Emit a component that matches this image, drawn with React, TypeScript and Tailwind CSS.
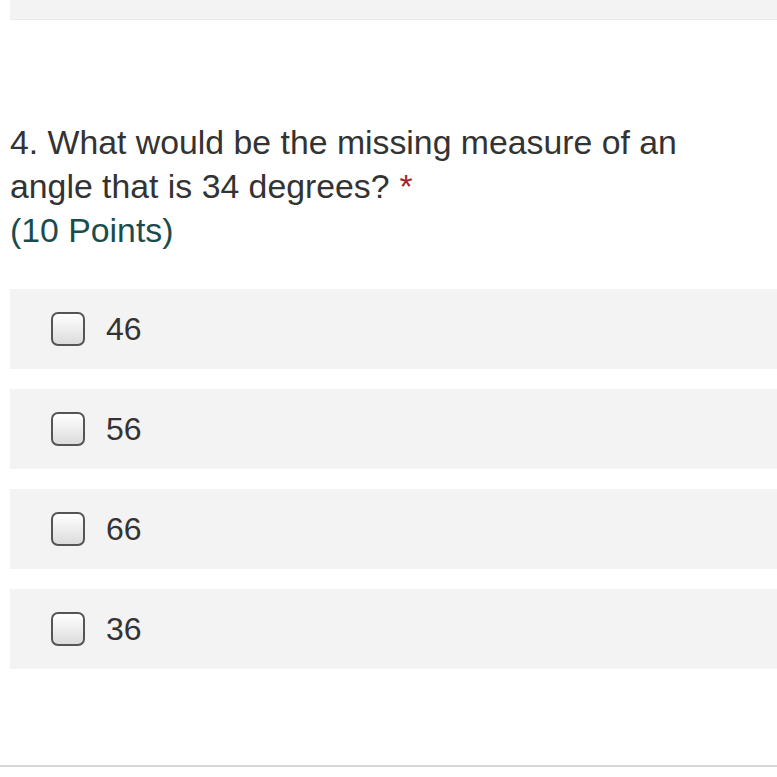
export default function App() {
  const options = ["46", "56", "66", "36"];
  return (
    <div
      className="w-[777px] h-[777px] bg-white overflow-hidden relative"
      style={{ fontFamily: '"Liberation Sans", Arial, sans-serif' }}
    >
      <div className="ml-[10px] h-[20px] bg-[#f3f3f3] border-b border-[#ececec]" />
      <div className="pl-[10px] pt-[100px]">
        <div className="max-w-[720px] text-[33.8px] leading-[44px] text-[#333333]">
          4. What would be the missing measure of an angle that is 34 degrees?
          <span className="ml-[10px] text-[33.8px] leading-none text-[#a4262c]">*</span>
        </div>
        <div className="text-[33.8px] leading-[44px] text-[#1b4c4c]">(10 Points)</div>
        <div className="mt-[37px] flex flex-col gap-[20px]">
          {options.map((o) => (
            <div key={o} className="h-[80px] bg-[#f3f3f3] flex items-center pl-[41px]">
              <div className="w-[34px] h-[34px] rounded-[7px] border-2 border-[#555555] bg-gradient-to-b from-white to-[#dcdcdc]" />
              <span className="ml-[21px] text-[32px] text-[#333333]">{o}</span>
            </div>
          ))}
        </div>
      </div>
      <div className="absolute left-0 right-0 top-[765px] h-[2px] bg-[#d6d6d6]" />
    </div>
  );
}
